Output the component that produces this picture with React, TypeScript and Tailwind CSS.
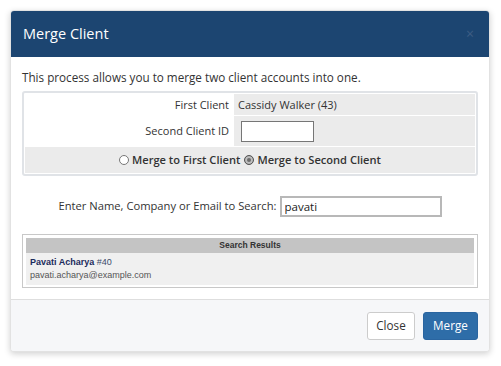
import React from 'react';

function Radio({ checked }: { checked?: boolean }) {
  return (
    <span
      className={
        'inline-block w-[10px] h-[10px] rounded-full border mr-[3px] ' +
        (checked ? 'border-[#555] bg-[#6b6b6b] shadow-[inset_0_0_0_2px_#bdbdbd]' : 'border-[#777] bg-white')
      }
    />
  );
}

export default function App() {
  return (
    <div className="w-[501px] h-[366px] bg-white pt-[10px] pl-[10px] font-['Open_Sans',sans-serif] text-[#333]">
      <div className="w-[480px] rounded-[4px] bg-white shadow-[0_2px_6px_rgba(0,0,0,0.18)] border border-[#e2e2e2] overflow-hidden">
        <div className="h-[46px] bg-[#1c4571] flex items-center justify-between pl-[12px] pr-[15px]">
          <h3 className="text-[14.5px] text-white leading-none">Merge Client</h3>
          <span className="text-[#3d5d84] text-[14px] leading-none">×</span>
        </div>

        <div className="px-[11px] pt-[11px] pb-[11px]">
          <p className="text-[11.7px] leading-[18px]">This process allows you to merge two client accounts into one.</p>

          <div className="mt-[5px] border-2 border-[#e0e3e7] rounded-[3px] p-px flex flex-col gap-px text-[11px]">
            <div className="flex gap-px h-[21px]">
              <div className="w-[208px] bg-white text-right pr-[4px] leading-[21px]">First Client</div>
              <div className="flex-1 bg-[#ebebeb] pl-[4px] leading-[21px]">Cassidy Walker (43)</div>
            </div>
            <div className="flex gap-px h-[30px]">
              <div className="w-[208px] bg-white text-right pr-[4px] leading-[30px]">Second Client ID</div>
              <div className="flex-1 bg-[#ebebeb] pl-[7px] flex items-center">
                <input className="w-[73px] h-[21px] bg-white border border-[#767676] outline-none" />
              </div>
            </div>
            <div className="h-[26px] bg-[#ebebeb] flex items-center justify-center font-semibold text-[11.1px]">
              <Radio />
              <span className="mr-[4px]">Merge to First Client</span>
              <Radio checked />
              <span>Merge to Second Client</span>
            </div>
          </div>

          <div className="mt-[20px] h-[21px] flex items-center justify-center text-[11.2px]">
            <span>Enter Name, Company or Email to Search:</span>
            <input
              defaultValue="pavati"
              className="ml-[3px] w-[162px] h-[21px] px-[3px] border-2 border-[#b8b8b8] text-[11.5px] text-[#222] outline-none font-['Open_Sans',sans-serif]"
            />
          </div>

          <div className="mt-[17px] border border-[#c8c8c8] p-[3px] pb-[2px] font-['Liberation_Sans',Arial,sans-serif]">
            <div className="h-[15px] bg-[#c4c4c4] text-center text-[8.5px] font-bold leading-[15px] text-[#333]">Search Results</div>
            <div className="bg-[#f0f0f0] px-[4px] pt-[3px] pb-[3px] text-[9px] leading-[13px]">
              <div>
                <span className="font-bold text-[#1b2b5c]">Pavati Acharya</span>{' '}
                <span className="text-[#3b4b6b]">#40</span>
              </div>
              <div className="text-[#555]">pavati.acharya@example.com</div>
            </div>
          </div>
        </div>

        <div className="h-[52px] bg-[#f6f7f9] border-t border-[#dedede] flex items-center justify-end gap-[8px] pr-[11px]">
          <button className="h-[28px] w-[48px] rounded-[3px] border border-[#ccc] bg-white text-[11.7px] text-[#333]">Close</button>
          <button className="h-[28px] w-[55px] rounded-[3px] border border-[#2a65a0] bg-[#2e6da8] text-[11.7px] text-white">Merge</button>
        </div>
      </div>
    </div>
  );
}
